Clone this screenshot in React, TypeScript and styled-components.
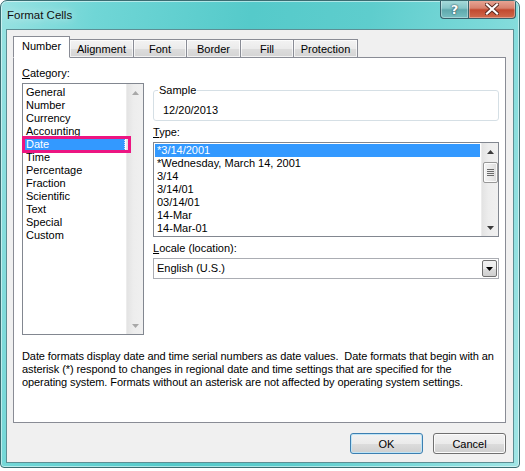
import React from "react";
import styled, { createGlobalStyle, css } from "styled-components";

const GlobalStyle = createGlobalStyle`
  html, body { margin: 0; padding: 0; background: #ffffff; }
  body { font-family: "Liberation Sans", Arial, sans-serif; font-size: 11px; color: #000; }
  * { box-sizing: border-box; }
`;

const Window = styled.div`
  width: 520px;
  height: 468px;
  border: 1px solid #3b6d72;
  border-radius: 7px 7px 4px 4px;
  background: linear-gradient(100deg, #98e2e2 0%, #70d6d6 16%, #55caca 42%, #5ecdcd 62%, #7cd9d9 82%, #a0e5e5 100%);
  box-shadow: inset 0 0 0 1px rgba(255, 255, 255, 0.5);
  display: flex;
  flex-direction: column;
  overflow: hidden;
`;

const TitleBar = styled.div`
  height: 28px;
  flex: none;
  display: flex;
  align-items: flex-start;
`;

const Title = styled.div`
  font-size: 11.5px;
  line-height: 14px;
  margin: 7px 0 0 6px;
  color: #101010;
  text-shadow: 0 0 8px rgba(255, 255, 255, 0.9);
`;

const CaptionButtons = styled.div`
  margin: -1px 3px 0 auto;
  display: flex;
`;

const CaptionButton = styled.div<{ $kind: "help" | "close" }>`
  height: 19px;
  border: 1px solid #38606a;
  border-top: none;
  display: flex;
  align-items: center;
  justify-content: center;
  box-shadow: inset 0 0 0 1px rgba(255, 255, 255, 0.35);
  ${(p) =>
    p.$kind === "help"
      ? css`
          width: 28px;
          border-radius: 0 0 0 4px;
          border-right: none;
          background: linear-gradient(#a9dcdc 0%, #86c6c8 45%, #5fa9ad 55%, #77bfc2 100%);
        `
      : css`
          width: 48px;
          border-radius: 0 0 4px 0;
          background: linear-gradient(#e9a898 0%, #d7826e 45%, #c2492f 55%, #cf6a4c 100%);
        `}
`;

const HelpGlyph = styled.span`
  font-family: "DejaVu Sans", sans-serif;
  font-weight: bold;
  font-size: 13px;
  color: #ffffff;
  text-shadow: 0 0 1px #2a4a55, 0 0 2px #2a4a55;
  line-height: 1;
`;

const Client = styled.div`
  flex: 1;
  margin: 0 5px 4px 5px;
  border: 1px solid #5d8e94;
  background: #f0f0f0;
  padding: 6px 7px 0 6px;
  display: flex;
  flex-direction: column;
`;

const TabList = styled.div`
  display: flex;
  align-items: flex-end;
  height: 22px;
  margin-bottom: -1px;
  position: relative;
  z-index: 1;
`;

const Tab = styled.div<{ $w: number; $active?: boolean }>`
  width: ${(p) => p.$w}px;
  margin-left: -1px;
  &:first-child { margin-left: 0; }
  border: 1px solid #898c95;
  display: flex;
  align-items: center;
  justify-content: center;
  font-size: 11px;
  ${(p) =>
    p.$active
      ? css`
          height: 22px;
          background: #ffffff;
          border-bottom-color: #ffffff;
          padding-bottom: 2px;
          position: relative;
          z-index: 2;
        `
      : css`
          height: 19px;
          background: linear-gradient(#f3f3f3 0%, #ebebeb 50%, #dddddd 51%, #d4d4d4 100%);
          box-shadow: inset 0 0 0 1px rgba(255, 255, 255, 0.7);
          padding-top: 1px;
        `}
`;

const Panel = styled.div`
  height: 366px;
  flex: none;
  border: 1px solid #898c95;
  background: #ffffff;
  padding: 9px 6px 0 8px;
  display: flex;
  flex-direction: column;
`;

const TopArea = styled.div`
  display: flex;
  gap: 9px;
`;

const LeftCol = styled.div`
  width: 122px;
  display: flex;
  flex-direction: column;
`;

const RightCol = styled.div`
  width: 346px;
  padding-top: 17px;
  display: flex;
  flex-direction: column;
`;

const Label = styled.div<{ $mt?: number }>`
  line-height: 13px;
  height: 13px;
  margin-top: ${(p) => p.$mt ?? 0}px;
  margin-bottom: 3px;
  white-space: nowrap;
`;

const ListBox = styled.div<{ $h: number; $clip?: boolean }>`
  height: ${(p) => p.$h}px;
  border: 1px solid #828790;
  background: #ffffff;
  display: flex;
  overflow: ${(p) => (p.$clip ? "hidden" : "visible")};
`;

const Items = styled.div<{ $pt: number; $clip?: boolean }>`
  flex: 1;
  padding: ${(p) => p.$pt}px 1px 0 1px;
  display: flex;
  flex-direction: column;
  overflow: ${(p) => (p.$clip ? "hidden" : "visible")};
`;

const Item = styled.div<{ $selected?: boolean }>`
  height: 13px;
  line-height: 13px;
  padding-left: 2px;
  flex: none;
  white-space: nowrap;
  position: relative;
  ${(p) =>
    p.$selected &&
    css`
      background: #3399ff;
      color: #ffffff;
    `}
`;

const FocusItem = styled(Item)`
  outline: 1px dotted #c8e2ff;
  outline-offset: -1px;
`;

const Highlight = styled.div`
  position: absolute;
  left: -2px;
  top: -2px;
  right: -6px;
  bottom: -2px;
  border: 3px solid #ec1582;
  pointer-events: none;
  z-index: 3;
`;

const ScrollBar = styled.div`
  width: 17px;
  flex: none;
  background: linear-gradient(90deg, #e3e3e3 0%, #ededed 40%, #f0f0f0 100%);
  border-left: 1px solid #ececec;
  display: flex;
  flex-direction: column;
  align-items: center;
`;

const ArrowBtn = styled.div`
  width: 16px;
  height: 17px;
  flex: none;
  display: flex;
  align-items: center;
  justify-content: center;
`;

const Track = styled.div`
  flex: 1;
  width: 100%;
  display: flex;
  flex-direction: column;
  align-items: center;
`;

const Thumb = styled.div`
  margin-top: 2px;
  width: 15px;
  height: 21px;
  border: 1px solid #979797;
  border-radius: 2px;
  background: linear-gradient(90deg, #f4f4f4 0%, #eaeaea 50%, #dcdcdc 100%);
  box-shadow: inset 0 0 0 1px rgba(255, 255, 255, 0.8);
  display: flex;
  align-items: center;
  justify-content: center;
`;

const GroupBox = styled.fieldset`
  margin: 0;
  height: 37px;
  border: 1px solid #d5dfe5;
  border-radius: 3px;
  padding: 0 0 0 9px;
  min-width: 0;
`;

const Legend = styled.legend`
  padding: 0 1px;
  margin-left: -5px;
  line-height: 13px;
  font-size: 11px;
`;

const SampleValue = styled.div`
  line-height: 13px;
  margin-top: 7px;
`;

const Dropdown = styled.div`
  height: 21px;
  border: 1px solid #abadb3;
  background: #ffffff;
  display: flex;
  align-items: center;
  padding: 0 1px 0 3px;
`;

const DropText = styled.div`
  flex: 1;
  line-height: 13px;
`;

const DropButton = styled.div`
  width: 15px;
  height: 17px;
  border: 1px solid #707070;
  border-radius: 2px;
  background: linear-gradient(#f2f2f2 0%, #ebebeb 50%, #dddddd 51%, #cfcfcf 100%);
  display: flex;
  align-items: center;
  justify-content: center;
`;

const Description = styled.div`
  margin-top: 15px;
  line-height: 13px;
  letter-spacing: -0.09px;
`;

const DescLine = styled.span`
  display: block;
  white-space: pre;
`;

const ButtonRow = styled.div`
  display: flex;
  justify-content: flex-end;
  gap: 10px;
  margin-top: 10px;
`;

const Button = styled.div<{ $default?: boolean }>`
  width: 73px;
  height: 21px;
  border: 1px solid ${(p) => (p.$default ? "#3c7fb1" : "#707070")};
  border-radius: 3px;
  background: linear-gradient(#f2f2f2 0%, #ebebeb 50%, #dddddd 51%, #cfcfcf 100%);
  box-shadow: inset 0 0 0 1px ${(p) => (p.$default ? "#bfe4f6" : "#fbfbfb")};
  display: flex;
  align-items: center;
  justify-content: center;
  font-size: 11px;
`;

const Triangle = ({ dir, color }: { dir: "up" | "down"; color: string }) => (
  <svg width="7" height="4" viewBox="0 0 7 4">
    <polygon points={dir === "up" ? "3.5,0 7,4 0,4" : "0,0 7,0 3.5,4"} fill={color} />
  </svg>
);

const Grip = () => (
  <svg width="7" height="8" viewBox="0 0 7 8">
    {[0.5, 2.5, 4.5, 6.5].map((y) => (
      <line key={y} x1="0" y1={y} x2="7" y2={y} stroke="#6a6a6a" strokeWidth="1" />
    ))}
  </svg>
);

const CloseX = () => (
  <svg width="14" height="12" viewBox="0 0 14 12">
    <path d="M2 1.5 L12 10.5 M12 1.5 L2 10.5" stroke="#5a2a20" strokeWidth="4" strokeLinecap="square" />
    <path d="M2 1.5 L12 10.5 M12 1.5 L2 10.5" stroke="#ffffff" strokeWidth="2.2" strokeLinecap="square" />
  </svg>
);

const categories = [
  "General", "Number", "Currency", "Accounting", "Date", "Time",
  "Percentage", "Fraction", "Scientific", "Text", "Special", "Custom",
];

const types = [
  "*3/14/2001", "*Wednesday, March 14, 2001", "3/14", "3/14/01", "03/14/01", "14-Mar", "14-Mar-01",
];

const tabs: { label: string; w: number }[] = [
  { label: "Number", w: 57 },
  { label: "Alignment", w: 65 },
  { label: "Font", w: 54 },
  { label: "Border", w: 55 },
  { label: "Fill", w: 54 },
  { label: "Protection", w: 65 },
];

export default function App() {
  return (
    <>
      <GlobalStyle />
      <Window>
        <TitleBar>
          <Title>Format Cells</Title>
          <CaptionButtons>
            <CaptionButton $kind="help">
              <HelpGlyph>?</HelpGlyph>
            </CaptionButton>
            <CaptionButton $kind="close">
              <CloseX />
            </CaptionButton>
          </CaptionButtons>
        </TitleBar>
        <Client>
          <TabList>
            {tabs.map((t, i) => (
              <Tab key={t.label} $w={t.w} $active={i === 0}>
                {t.label}
              </Tab>
            ))}
          </TabList>
          <Panel>
            <TopArea>
              <LeftCol>
                <Label>
                  <u>C</u>ategory:
                </Label>
                <ListBox $h={252}>
                  <Items $pt={2}>
                    {categories.map((c) =>
                      c === "Date" ? (
                        <FocusItem key={c} $selected>
                          {c}
                          <Highlight />
                        </FocusItem>
                      ) : (
                        <Item key={c}>{c}</Item>
                      )
                    )}
                  </Items>
                  <ScrollBar>
                    <ArrowBtn>
                      <Triangle dir="up" color="#a8a8a8" />
                    </ArrowBtn>
                    <Track />
                    <ArrowBtn>
                      <Triangle dir="down" color="#a8a8a8" />
                    </ArrowBtn>
                  </ScrollBar>
                </ListBox>
              </LeftCol>
              <RightCol>
                <GroupBox>
                  <Legend>Sample</Legend>
                  <SampleValue>12/20/2013</SampleValue>
                </GroupBox>
                <Label $mt={5}>
                  <u>T</u>ype:
                </Label>
                <ListBox $h={95} $clip>
                  <Items $pt={1} $clip>
                    {types.map((t, i) => (
                      <Item key={t} $selected={i === 0}>
                        {t}
                      </Item>
                    ))}
                  </Items>
                  <ScrollBar>
                    <ArrowBtn>
                      <Triangle dir="up" color="#3c3c3c" />
                    </ArrowBtn>
                    <Track>
                      <Thumb>
                        <Grip />
                      </Thumb>
                    </Track>
                    <ArrowBtn>
                      <Triangle dir="down" color="#3c3c3c" />
                    </ArrowBtn>
                  </ScrollBar>
                </ListBox>
                <Label $mt={5}>
                  <u>L</u>ocale (location):
                </Label>
                <Dropdown>
                  <DropText>English (U.S.)</DropText>
                  <DropButton>
                    <Triangle dir="down" color="#000000" />
                  </DropButton>
                </Dropdown>
              </RightCol>
            </TopArea>
            <Description>
              <DescLine>Date formats display date and time serial numbers as date values.  Date formats that begin with an</DescLine>
              <DescLine>asterisk (*) respond to changes in regional date and time settings that are specified for the</DescLine>
              <DescLine>operating system. Formats without an asterisk are not affected by operating system settings.</DescLine>
            </Description>
          </Panel>
          <ButtonRow>
            <Button $default>OK</Button>
            <Button>Cancel</Button>
          </ButtonRow>
        </Client>
      </Window>
    </>
  );
}
